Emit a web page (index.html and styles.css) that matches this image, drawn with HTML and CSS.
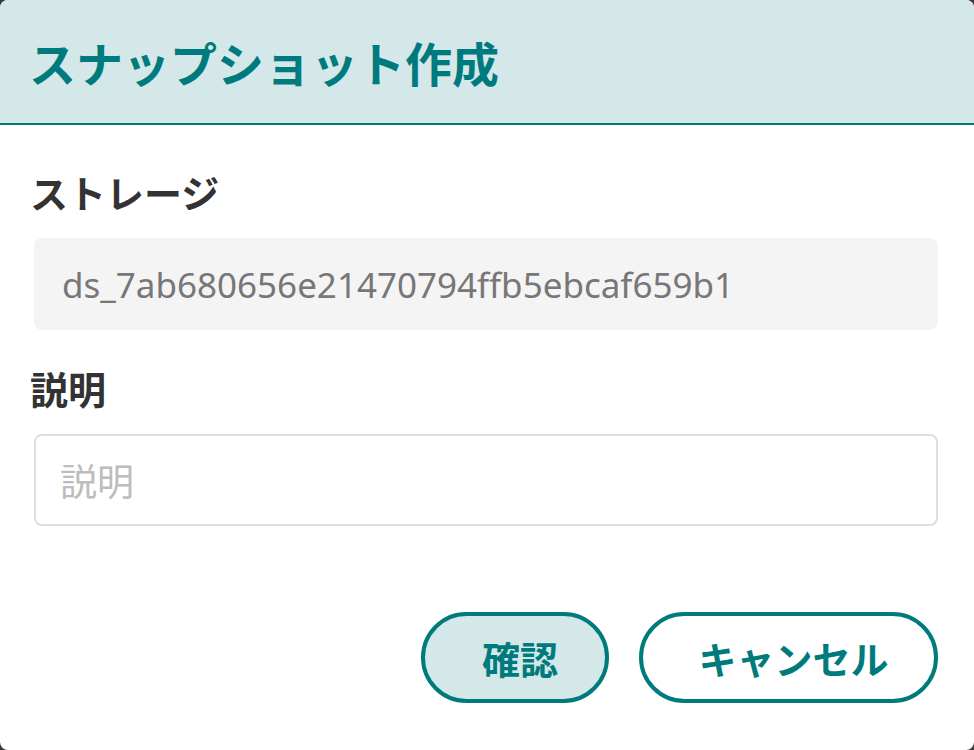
FILE: index.html
```html
<!DOCTYPE html>
<html lang="ja">
<head>
<meta charset="utf-8">
<title>スナップショット作成</title>
<link rel="stylesheet" href="styles.css">
</head>
<body>
<div class="dialog">
  <header class="dialog-header">
    <h1 class="dialog-title">スナップショット作成</h1>
  </header>
  <div class="dialog-body">
    <div class="field">
      <label class="field-label">ストレージ</label>
      <div class="field-readonly">ds_7ab680656e21470794ffb5ebcaf659b1</div>
    </div>
    <div class="field field-desc">
      <label class="field-label" for="desc">説明</label>
      <input class="field-input" id="desc" type="text" placeholder="説明">
    </div>
  </div>
  <div class="dialog-footer">
    <button class="btn btn-primary">確認</button>
    <button class="btn btn-secondary">キャンセル</button>
  </div>
</div>
</body>
</html>
```
FILE: styles.css
```css
* { box-sizing: border-box; }
html, body { margin: 0; height: 100%; }
body {
  background: #3a3a3a;
  font-family: "Noto Sans", "Noto Sans CJK JP", sans-serif;
}
.dialog {
  height: 100vh;
  background: #fff;
  border-radius: 8px;
  overflow: hidden;
  display: flex;
  flex-direction: column;
}
.dialog-header {
  height: 125px;
  background: #d4e7e9;
  border-bottom: 2px solid #007b7d;
  display: flex;
  align-items: center;
  padding: 0 29px;
}
.dialog-title {
  margin: 0;
  font-family: "Noto Sans CJK JP", sans-serif;
  font-size: 47px;
  font-weight: 700;
  color: #007b7d;
  line-height: 1;
}
.dialog-body {
  padding: 43px 36px 0 34px;
}
.field { display: flex; flex-direction: column; }
.field-desc { margin-top: 34px; }
.field-label {
  font-family: "Noto Sans CJK JP", sans-serif;
  font-size: 38px;
  font-weight: 700;
  color: #333;
  line-height: 48px;
  margin: 0 0 22px -4px;
}
.field-readonly {
  height: 92px;
  background: #f4f4f4;
  border-radius: 8px;
  padding: 0 28px;
  display: flex;
  align-items: center;
  font-size: 35px;
  color: #777;
}
.field-input {
  height: 92px;
  border: 2px solid #dedede;
  border-radius: 8px;
  padding: 0 24px;
  font-family: "Noto Sans CJK JP", sans-serif;
  font-size: 37px;
  color: #333;
  outline: none;
  background: #fff;
}
.field-input::placeholder { color: #bdbdbd; }
.dialog-footer {
  display: flex;
  justify-content: flex-end;
  gap: 30px;
  padding: 86px 36px 0 34px;
}
.btn {
  height: 91px;
  border: 4px solid #007b7d;
  border-radius: 46px;
  font-family: "Noto Sans CJK JP", sans-serif;
  font-size: 38px;
  font-weight: 700;
  color: #007b7d;
  cursor: pointer;
  padding: 0 0 0 10px;
}
.btn-primary { width: 188px; background: #d4e7e9; }
.btn-secondary { width: 299px; background: #fff; }
```
